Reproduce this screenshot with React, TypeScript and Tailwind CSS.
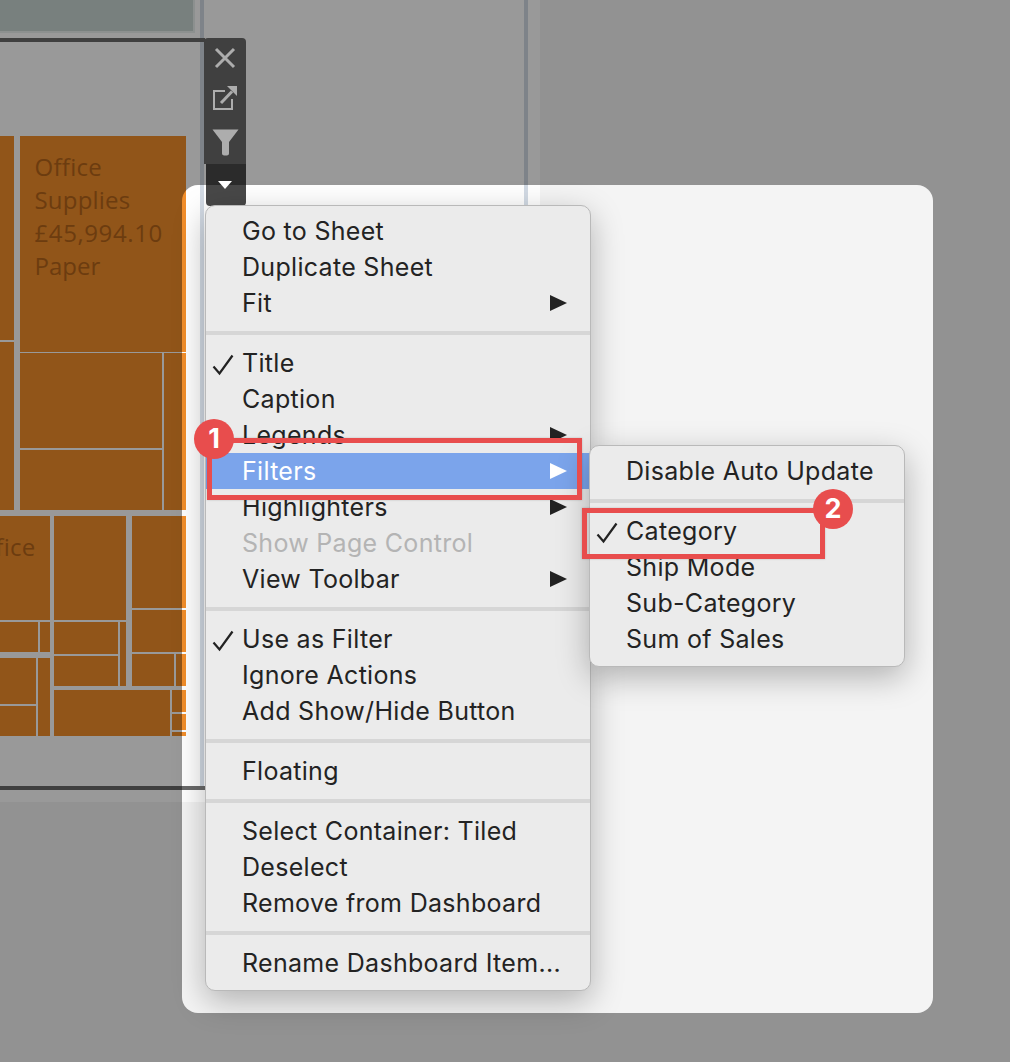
const menuFont = "[font-family:Inter,'Liberation_Sans',sans-serif]";

type Row = { label: string; checked?: boolean; arrow?: boolean; active?: boolean; disabled?: boolean };

const mainMenu: Row[][] = [
  [{ label: "Go to Sheet" }, { label: "Duplicate Sheet" }, { label: "Fit", arrow: true }],
  [
    { label: "Title", checked: true },
    { label: "Caption" },
    { label: "Legends", arrow: true },
    { label: "Filters", arrow: true, active: true },
    { label: "Highlighters", arrow: true },
    { label: "Show Page Control", disabled: true },
    { label: "View Toolbar", arrow: true },
  ],
  [{ label: "Use as Filter", checked: true }, { label: "Ignore Actions" }, { label: "Add Show/Hide Button" }],
  [{ label: "Floating" }],
  [{ label: "Select Container: Tiled" }, { label: "Deselect" }, { label: "Remove from Dashboard" }],
  [{ label: "Rename Dashboard Item..." }],
];

const subMenu: Row[][] = [
  [{ label: "Disable Auto Update" }],
  [{ label: "Category", checked: true }, { label: "Ship Mode" }, { label: "Sub-Category" }, { label: "Sum of Sales" }],
];

// x, y, w, h of every treemap tile
const tiles = [
  [0, 136, 14, 204], [0, 342, 14, 168],
  [20, 136, 166, 216], [20, 353, 142, 95], [20, 450, 142, 60], [164, 353, 22, 157],
  [0, 516, 50, 104], [0, 622, 38, 30], [40, 622, 10, 30], [0, 658, 36, 46], [0, 706, 36, 30], [38, 658, 12, 78],
  [54, 516, 72, 104], [54, 622, 64, 32], [54, 656, 64, 30], [120, 622, 6, 64],
  [132, 516, 54, 92], [132, 610, 54, 42], [132, 654, 42, 32], [176, 654, 10, 32],
  [54, 690, 116, 46], [172, 690, 14, 22], [172, 714, 14, 16], [172, 732, 14, 4],
];

function Treemap() {
  return (
    <svg width="186" height="600" viewBox="0 136 186 600" className="block" style={{ fontFamily: "'Open Sans', sans-serif" }}>
      {tiles.map(([x, y, w, h], i) => (
        <rect key={i} x={x} y={y} width={w} height={h} fill="#f28e2b" />
      ))}
      <g fill="#b5651a" fontSize="24">
        <text x="34.5" y="176" letterSpacing="0.3">Office</text>
        <text x="34.5" y="209" letterSpacing="0.2">Supplies</text>
        <text x="34.5" y="242" letterSpacing="0.6">£45,994.10</text>
        <text x="34.5" y="275">Paper</text>
        <text x="-32" y="556" letterSpacing="0.3">Office</text>
      </g>
    </svg>
  );
}

function Check() {
  return (
    <svg width="22" height="22" viewBox="0 0 22 22" className="absolute left-[6px] top-[9px]">
      <path d="M1.5 12.5 L7.5 19.5 L20.5 1.5" fill="none" stroke="#222" strokeWidth="2.2" />
    </svg>
  );
}

function Arrow({ color }: { color: string }) {
  return (
    <svg width="17" height="16" viewBox="0 0 17 16" className="absolute right-[23px] top-[10px]">
      <path d="M0 0 L17 8 L0 16 Z" fill={color} />
    </svg>
  );
}

function Menu({ groups, className }: { groups: Row[][]; className: string }) {
  return (
    <div className={`absolute rounded-[10px] border border-[#b9b9b9] bg-[#ebebeb] pb-[9px] pt-[7px] shadow-[0_10px_32px_rgba(0,0,0,0.28)] ${menuFont} ${className}`}>
      {groups.map((rows, g) => (
        <div key={g}>
          {g > 0 && <div className="my-[10px] h-[4px] bg-[#d6d6d6]" />}
          {rows.map((row) => (
            <div
              key={row.label}
              className={`relative h-[36px] whitespace-nowrap pl-[36px] text-[25px] leading-[36px] tracking-[0.3px] ${
                row.active ? "bg-[#7ba4eb] text-white" : row.disabled ? "text-[#b4b4b4]" : "text-[#232323]"
              }`}
            >
              {row.checked && <Check />}
              {row.label}
              {row.arrow && <Arrow color={row.active ? "#ffffff" : "#222222"} />}
            </div>
          ))}
        </div>
      ))}
    </div>
  );
}

function Callout({ n, box, badge }: { n: number; box: string; badge: string }) {
  return (
    <div className={`absolute border-[5px] border-[#e84d4d] shadow-[0_0_2px_rgba(0,0,0,0.2)] ${box}`}>
      <div className={`absolute flex h-[40px] w-[40px] items-center justify-center rounded-full bg-[#e84d4d] text-[27px] font-bold text-white ${menuFont} ${badge}`}>
        {n}
      </div>
    </div>
  );
}

function ToolbarIcons() {
  return (
    <div className="absolute left-[205px] top-[38px] flex w-[40px] flex-col items-center text-[#adadad]">
      <div className="flex h-[40px] items-center justify-center">
        <svg width="22" height="22" viewBox="0 0 22 22">
          <path d="M2 2 L20 20 M20 2 L2 20" stroke="currentColor" strokeWidth="3" />
        </svg>
      </div>
      <div className="flex h-[40px] items-center justify-center">
        <svg width="26" height="26" viewBox="0 0 26 26">
          <path d="M13 6 H2 V24 H20 V14" fill="none" stroke="currentColor" strokeWidth="2" />
          <path d="M9 18 L20 6.5" fill="none" stroke="currentColor" strokeWidth="3" />
          <path d="M15 1 H25 V11 Z" fill="currentColor" />
        </svg>
      </div>
      <div className="flex h-[46px] items-center justify-center pt-[2px]">
        <svg width="27" height="27" viewBox="0 0 27 27">
          <path d="M0.5 0.5 H26.5 L17 13 V24.5 Q17 26.5 13.5 26.5 Q10 26.5 10 24.5 V13 Z" fill="currentColor" />
        </svg>
      </div>
      <div className="flex h-[42px] w-[42px] items-center justify-center">
        <svg width="14" height="8" viewBox="0 0 14 8">
          <path d="M0 0 H14 L7 8 Z" fill="#ffffff" />
        </svg>
      </div>
    </div>
  );
}

export default function App() {
  return (
    <div className="relative h-[1062px] w-[1010px] overflow-hidden bg-[#f4f4f4]">
      {/* dashboard behind the dim layer */}
      <div className="relative flex h-[802px] w-[540px] bg-white">
        <div className="h-[790px] w-[204px] shrink-0 border-r-4 border-[#d2dae4]">
          <div className="h-[33px] w-[195px] border-b-2 border-r-2 border-[#eaf0ef] bg-[#c8d5d3]" />
          <div className="mt-[5px] h-[752px] w-[205px] border-y-4 border-[#6a6a6a] pt-[94px]">
            <Treemap />
          </div>
        </div>
        <div className="box-content h-full w-[320px] border-r-4 border-[#d2dae4]" />
        <div className="absolute left-[204px] top-[38px] w-[42px]">
          <div className="h-[126px] rounded-t-[4px] bg-[#6b6b6b]" />
          <div className="ml-auto h-[42px] w-[40px] rounded-b-[4px] bg-[#484848]" />
        </div>
      </div>

      {/* spotlight: everything outside this box is dimmed */}
      <div className="absolute left-[182px] top-[185px] h-[828px] w-[751px] rounded-[16px] shadow-[0_0_0_2000px_rgba(0,0,0,0.4)]" />

      <ToolbarIcons />

      <Menu groups={mainMenu} className="left-[205px] top-[205px] w-[386px]" />
      <Menu groups={subMenu} className="left-[589px] top-[445px] w-[316px]" />

      <Callout n={1} box="left-[207px] top-[438px] h-[62px] w-[375px]" badge="-left-[18px] -top-[24px]" />
      <Callout n={2} box="left-[582px] top-[508px] h-[51px] w-[243px]" badge="left-[226px] -top-[24px]" />
    </div>
  );
}
